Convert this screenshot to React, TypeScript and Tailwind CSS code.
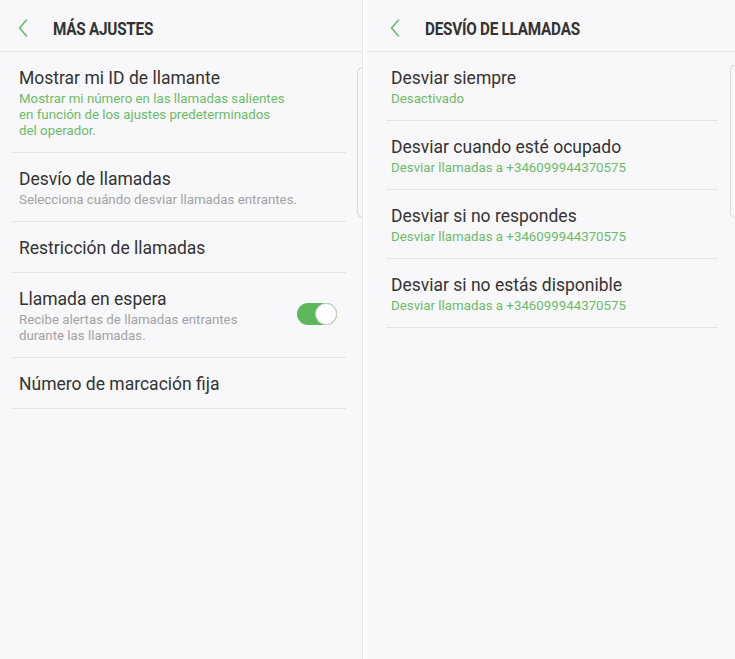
import React from "react"

const font = { fontFamily: "Roboto, 'Noto Sans', 'Liberation Sans', sans-serif" }

function BackArrow() {
  return (
    <svg width="10" height="18" viewBox="0 0 10 18" fill="none" className="shrink-0">
      <path d="M8.5 1 L1.5 9 L8.5 17" stroke="#6bb86a" strokeWidth="1.6" strokeLinecap="round" strokeLinejoin="round" />
    </svg>
  )
}

function Header({ title, pad }: { title: string; pad: string }) {
  return (
    <div className={`flex h-[52px] items-center border-b border-[#e6e6e8] pt-[5px] ${pad}`}>
      <BackArrow />
      <h1 className="ml-[25px] text-[18px] font-bold tracking-[-0.3px] text-[#333] [transform:scaleX(0.85)] origin-left">
        {title}
      </h1>
    </div>
  )
}

type Item = { title: string; sub?: string[]; green?: boolean; toggle?: boolean }

function Row({ item }: { item: Item }) {
  return (
    <div className="flex items-center pt-[15px] pb-[13px]">
      <div className="flex-1">
        <div className="text-[17.5px] leading-[22px] text-[#333]">{item.title}</div>
        {item.sub && (
          <div className={`mt-[2px] text-[13.3px] leading-[16px] ${item.green ? "text-[#6cbb69]" : "text-[#a3a3a3]"}`}>
            {item.sub.map((s) => (
              <div key={s}>{s}</div>
            ))}
          </div>
        )}
      </div>
      {item.toggle && (
        <div className="mr-[9px] mt-[-4px] flex h-[22px] w-[40px] items-center rounded-full bg-[#5cb85a]">
          <div className="ml-auto h-[22px] w-[22px] rounded-full border border-[#cfcfcf] bg-white" />
        </div>
      )}
    </div>
  )
}

const left: Item[] = [
  {
    title: "Mostrar mi ID de llamante",
    sub: [
      "Mostrar mi número en las llamadas salientes",
      "en función de los ajustes predeterminados",
      "del operador.",
    ],
    green: true,
  },
  { title: "Desvío de llamadas", sub: ["Selecciona cuándo desviar llamadas entrantes."] },
  { title: "Restricción de llamadas" },
  {
    title: "Llamada en espera",
    sub: ["Recibe alertas de llamadas entrantes", "durante las llamadas."],
    toggle: true,
  },
  { title: "Número de marcación fija" },
]

const right: Item[] = [
  { title: "Desviar siempre", sub: ["Desactivado"], green: true },
  { title: "Desviar cuando esté ocupado", sub: ["Desviar llamadas a +346099944370575"], green: true },
  { title: "Desviar si no respondes", sub: ["Desviar llamadas a +346099944370575"], green: true },
  { title: "Desviar si no estás disponible", sub: ["Desviar llamadas a +346099944370575"], green: true },
]

export default function App() {
  return (
    <div className="flex h-[659px] w-[735px] overflow-hidden bg-[#f8f8fa]" style={font}>
      <section className="relative w-[362px] shrink-0">
        <Header title="MÁS AJUSTES" pad="pl-[18px]" />
        <div className="ml-[12px] mr-[16px]">
          {left.map((it) => (
            <div key={it.title} className="border-b border-[#e4e4e6] pl-[7px]">
              <Row item={it} />
            </div>
          ))}
        </div>
        <div className="absolute right-[-1px] top-[67px] h-[151px] w-[6px] rounded-l-[6px] border border-r-0 border-[#d9d9dc]" />
      </section>

      <div className="w-[5px] shrink-0 border-l border-[#e8e8ea] bg-white" />

      <section className="relative flex-1">
        <Header title="DESVÍO DE LLAMADAS" pad="pl-[23px]" />
        <div className="ml-[19px] mr-[17px]">
          {right.map((it) => (
            <div key={it.title} className="border-b border-[#e4e4e6] pl-[5px]">
              <Row item={it} />
            </div>
          ))}
        </div>
        <div className="absolute right-0 top-[65px] h-[153px] w-[5px] rounded-l-[6px] border border-r-0 border-[#d9d9dc]" />
      </section>
    </div>
  )
}
